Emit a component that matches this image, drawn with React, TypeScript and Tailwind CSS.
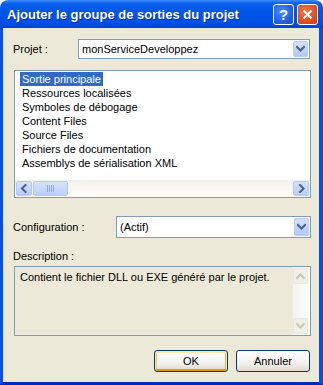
import React from 'react';

const items = [
  'Sortie principale',
  'Ressources localisées',
  'Symboles de débogage',
  'Content Files',
  'Source Files',
  'Fichiers de documentation',
  'Assemblys de sérialisation XML',
];

// petite flèche en chevron, style XP
const Chevron: React.FC<{ dir: 'up' | 'down' | 'left' | 'right'; color?: string }> = ({ dir, color = '#4D6185' }) => {
  const pts = {
    down: '1,2 4.5,5.5 8,2',
    up: '1,6 4.5,2.5 8,6',
    left: '5.5,1 2,4.5 5.5,8',
    right: '3,1 6.5,4.5 3,8',
  }[dir];
  return (
    <svg width="9" height="9" viewBox="0 0 9 9">
      <polyline points={pts} fill="none" stroke={color} strokeWidth="2" strokeLinecap="square" />
    </svg>
  );
};

const ComboBox: React.FC<{ value: string; className?: string }> = ({ value, className }) => (
  <div className={`flex items-center bg-white border border-[#7F9DB9] p-px ${className ?? ''}`}>
    <span className="flex-1 pl-[2px] leading-none">{value}</span>
    <div className="w-[15px] h-full flex items-center justify-center rounded-[2px] border border-[#B9CCF5] bg-[linear-gradient(to_bottom,#D3E0FD,#B4C9F8)]">
      <Chevron dir="down" />
    </div>
  </div>
);

const ScrollBtn: React.FC<{ dir: 'up' | 'down' | 'left' | 'right'; disabled?: boolean }> = ({ dir, disabled }) =>
  disabled ? (
    <div className="w-[15px] h-[16px] flex items-center justify-center rounded-[2px] border border-[#E8E7DE] bg-[#F0EFE8]">
      <Chevron dir={dir} color="#C9C7BA" />
    </div>
  ) : (
    <div className="w-[16px] h-[15px] flex items-center justify-center rounded-[2px] border border-[#B5C8F3] bg-[linear-gradient(to_bottom,#D6E2FD,#B8CCF9)]">
      <Chevron dir={dir} />
    </div>
  );

const XpButton: React.FC<{ label: string; primary?: boolean }> = ({ label, primary }) => (
  <button
    className={`w-[74px] h-[22px] rounded-[3px] border border-[#003C74] bg-[linear-gradient(to_bottom,#FFFFFF,#F3F2EE_60%,#DCD8CC)] text-[11px] leading-none ${
      primary ? 'shadow-[inset_0_1px_0_1px_#FFE7A8,inset_0_-1px_0_1px_#E5970E,inset_1px_0_0_1px_#F8C460,inset_-1px_0_0_1px_#F0B040]' : ''
    }`}
  >
    {label}
  </button>
);

const App: React.FC = () => {
  return (
    <div className="w-[323px] h-[385px] flex flex-col font-['Liberation_Sans',Arial,sans-serif] text-[11px] text-black">
      {/* barre de titre */}
      <div className="h-[28px] shrink-0 rounded-t-[8px] flex items-center pl-[7px] pr-[5px] bg-[linear-gradient(to_bottom,#3D8BFB_0%,#0A5FEC_12%,#0055E8_45%,#0052E6_80%,#0044D2_100%)]">
        <span className="flex-1 text-white font-bold text-[13px] leading-none pt-[1px] [text-shadow:1px_1px_0_#0B2A8C]">
          Ajouter le groupe de sorties du projet
        </span>
        <div className="flex gap-[3px]">
          <div className="w-[21px] h-[21px] rounded-[3px] border border-white flex items-center justify-center bg-[radial-gradient(circle_at_40%_35%,#4E8DFB,#2260E6_60%,#1A4FD3)] text-white font-bold text-[15px] leading-none">
            ?
          </div>
          <div className="w-[21px] h-[21px] rounded-[3px] border border-white flex items-center justify-center bg-[radial-gradient(circle_at_40%_35%,#EE7A52,#E0501F_60%,#C93D10)]">
            <svg width="11" height="11" viewBox="0 0 11 11">
              <path d="M1.5 1.5 L9.5 9.5 M9.5 1.5 L1.5 9.5" stroke="white" strokeWidth="2" />
            </svg>
          </div>
        </div>
      </div>

      {/* corps */}
      <div className="flex-1 flex flex-col bg-[#ECE9D8] border-l-[3px] border-r-[4px] border-b-[3px] border-[#0550E6] border-b-[#0027B8] pl-[10px] pr-[8px] pt-[11px]">
        <div className="flex items-center h-[20px]">
          <span className="w-[65px]">Projet :</span>
          <ComboBox value="monServiceDeveloppez" className="flex-1 h-[20px] mr-px" />
        </div>

        {/* liste */}
        <div className="ml-px mt-[11px] h-[128px] flex flex-col bg-white border border-[#7F9DB9]">
          <div className="flex-1 pt-px pl-[5px]">
            {items.map((it, i) => (
              <div key={it} className="h-[14px] leading-[14px]">
                <span className={`inline-block px-[2px] ${i === 0 ? 'bg-[#316AC5] text-white' : ''}`}>{it}</span>
              </div>
            ))}
          </div>
          <div className="h-[17px] flex items-center gap-px px-px bg-[linear-gradient(to_bottom,#F3F1EC,#FEFEFB)]">
            <ScrollBtn dir="left" />
            <div className="w-[35px] h-[15px] flex items-center justify-center gap-px rounded-[2px] border border-[#B5C8F3] bg-[linear-gradient(to_bottom,#D6E2FD,#BCCFFA)]">
              {[0, 1, 2, 3].map((k) => (
                <div key={k} className="w-px h-[7px] bg-[#8FA9E8]" />
              ))}
            </div>
            <div className="flex-1" />
            <ScrollBtn dir="right" />
          </div>
        </div>

        <div className="flex items-center mt-[18px] h-[22px]">
          <span className="w-[103px]">Configuration :</span>
          <ComboBox value="(Actif)" className="flex-1 h-[22px]" />
        </div>

        <div className="mt-[12px] h-[13px] leading-[13px]">Description :</div>

        <div className="ml-px mt-[3px] h-[70px] flex border border-[#7F9DB9]">
          <div className="flex-1 pl-[5px] pt-[4px] leading-[13px]">Contient le fichier DLL ou EXE généré par le projet.</div>
          <div className="w-[17px] flex flex-col justify-between py-px pr-[2px] bg-[linear-gradient(to_right,#F4F3EE,#FEFEFD)]">
            <ScrollBtn dir="up" disabled />
            <ScrollBtn dir="down" disabled />
          </div>
        </div>

        <div className="mt-[14px] flex justify-end gap-[8px] mr-px">
          <XpButton label="OK" primary />
          <XpButton label="Annuler" />
        </div>
      </div>
    </div>
  );
};

export default App;
